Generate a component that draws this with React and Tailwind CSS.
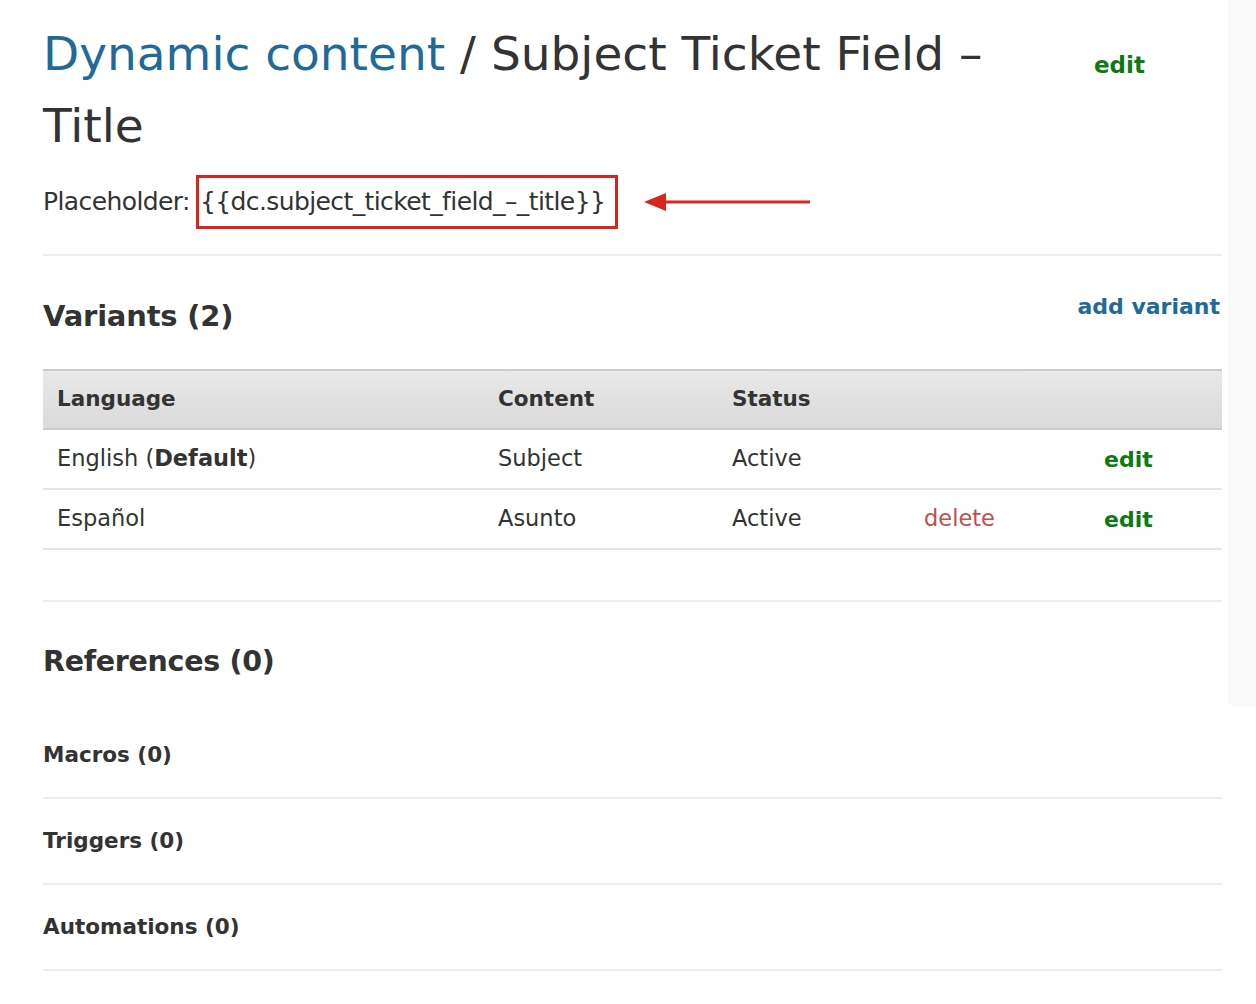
import React from 'react'

const font = { fontFamily: '"DejaVu Sans", "Open Sans", sans-serif' }

function Arrow() {
  return (
    <svg width="170" height="24" viewBox="0 0 170 24" className="ml-[26px]">
      <line x1="18" y1="12" x2="166" y2="12" stroke="#d9261c" strokeWidth="3" />
      <polygon points="0,12 22,3 22,21" fill="#d9261c" />
    </svg>
  )
}

function Row({ lang, content, status, del }) {
  return (
    <div className="grid grid-cols-[441px_234px_192px_180px_1fr] items-center h-[60px] border-b-2 border-[#e6e6e6] text-[22.5px] text-[#333] pl-[14px]">
      <div>{lang}</div>
      <div>{content}</div>
      <div>{status}</div>
      <div className="text-[#c0504d]">{del ? 'delete' : ''}</div>
      <div className="font-bold text-[#0d7a12] text-[22px]">edit</div>
    </div>
  )
}

export default function App() {
  return (
    <div className="relative min-h-[1004px] bg-white overflow-hidden" style={font}>
      <div className="absolute right-0 top-0 w-[28px] h-[707px] bg-[#f9f9f9] rounded-bl-[8px]" />
      <div className="w-[1179px] ml-[43px] pt-[18px]">
        <div className="flex items-start">
          <h1 className="w-[1000px] text-[47px] leading-[72px] text-[#333]">
            <span className="text-[#1f6a96]">Dynamic content</span> / Subject Ticket Field – Title
          </h1>
          <a className="ml-[51px] mt-[30px] text-[23px] font-bold text-[#0d7a12]">edit</a>
        </div>
        <div className="flex items-center mt-[13px] text-[25px] text-[#333] tracking-[-0.6px]">
          <span>Placeholder:</span>
          <span className="ml-[6px] border-[3px] border-[#d9261c] h-[54px] flex items-center pl-[1px] pr-[10px]">
            {'{{dc.subject_ticket_field_–_title}}'}
          </span>
          <Arrow />
        </div>
        <div className="mt-[25px] border-t-2 border-[#eeeeee]" />

        <div className="flex items-start justify-between mt-[38px]">
          <h2 className="text-[29px] font-bold text-[#333] leading-[44px] tracking-[-0.2px]">Variants (2)</h2>
          <a className="text-[22px] font-bold text-[#1f6a96] mt-[-4px] mr-[2px]">add variant</a>
        </div>

        <div className="mt-[31px]">
          <div className="grid grid-cols-[441px_234px_1fr] items-center h-[61px] border-t-2 border-b-2 border-[#cccccc] bg-gradient-to-b from-[#e9e9e9] to-[#dbd9db] text-[21.5px] font-bold text-[#333] pl-[14px]">
            <div>Language</div>
            <div>Content</div>
            <div>Status</div>
          </div>
          <Row lang={<>English (<b>Default</b>)</>} content="Subject" status="Active" />
          <Row lang="Español" content="Asunto" status="Active" del />
        </div>

        <div className="mt-[50px] border-t-2 border-[#eeeeee]" />

        <h2 className="mt-[38px] text-[28.5px] font-bold text-[#333] leading-[44px] tracking-[-0.3px]">References (0)</h2>

        <div className="mt-[29px]">
          {['Macros (0)', 'Triggers (0)', 'Automations (0)'].map(t => (
            <div key={t} className="flex items-center h-[86px] border-b-2 border-[#eeeeee] text-[21.5px] font-bold text-[#333]">
              {t}
            </div>
          ))}
        </div>
      </div>
    </div>
  )
}
